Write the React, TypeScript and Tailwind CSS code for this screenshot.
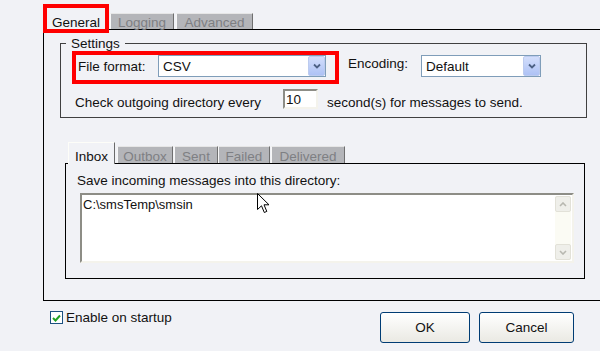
import React from 'react';

const ComboBox: React.FC<{ value: string; className: string }> = ({ value, className }) => (
  <div className={`${className} h-[22px] border border-[#7f9db9] bg-white flex items-center`}>
    <span className="flex-1 pl-[4px] leading-[13px]">{value}</span>
    <span className="w-[17px] h-[20px] rounded-[2px] border border-[#bccbef] bg-linear-to-b from-[#d3defb] to-[#aec2f5] flex items-center justify-center">
      <svg width="8" height="6" viewBox="0 0 8 6">
        <path d="M1 1.5 L4 4.5 L7 1.5" fill="none" stroke="#4d6185" strokeWidth="1.8" />
      </svg>
    </span>
  </div>
);

const ScrollButton: React.FC<{ up?: boolean }> = ({ up }) => (
  <div className="w-[16px] h-[16px] rounded-[2px] border border-[#e2e1d8] bg-[#efefea] flex items-center justify-center">
    <svg width="8" height="5" viewBox="0 0 8 5">
      <path d={up ? 'M1 4 L4 1 L7 4' : 'M1 1 L4 4 L7 1'} fill="none" stroke="#b8b8b0" strokeWidth="1.6" />
    </svg>
  </div>
);

const App: React.FC = () => {
  return (
    <div className="relative w-[600px] h-[351px] overflow-hidden bg-[#f1f2f6] text-[13.5px] text-[#111] font-['Liberation_Sans',Arial,sans-serif]">
      {/* Top tabs */}
      <div className="flex items-end h-[29px] pl-[43px]">
        <div className="relative z-10 -mb-[4px] w-[66px] h-[29px] border-4 border-[#ff0000] bg-[#f1f2f6] pt-[8px] text-center leading-[13px]">
          General
        </div>
        <div className="ml-[1px] w-[64px] h-[16px] border-t border-l border-r border-t-[#e6e6e6] border-l-[#f7f7f7] border-r-[#6f6f6f] bg-[#b4b5b9] text-[#7e7f83] text-center leading-[13px] pt-[2px]">
          Logging
        </div>
        <div className="ml-[2px] w-[77px] h-[16px] border-t border-l border-r border-t-[#e6e6e6] border-l-[#f7f7f7] border-r-[#6f6f6f] bg-[#b4b5b9] text-[#7e7f83] text-center leading-[13px] pt-[2px]">
          Advanced
        </div>
      </div>

      {/* General panel */}
      <div className="ml-[43px] w-[570px] h-[272px] border-t border-l border-b border-black">
        <fieldset className="ml-[16px] mt-[7px] w-[527px] h-[81px] border border-[#404040]">
          <legend className="ml-[5px] px-[5px] leading-[13px]">Settings</legend>
          <div className="flex items-start mt-[1px] ml-[11px]">
            <div className="w-[267px] h-[33px] border-4 border-[#ff0000] flex items-start">
              <span className="w-[82px] pl-[2px] pt-[5px] leading-[13px]">File format:</span>
              <ComboBox value="CSV" className="w-[168px]" />
            </div>
            <span className="ml-[9px] mt-[6px] w-[73px] leading-[13px]">Encoding:</span>
            <div className="mt-[4px]">
              <ComboBox value="Default" className="w-[120px]" />
            </div>
          </div>
          <div className="flex items-start mt-[5px] ml-[14px]">
            <span className="w-[208px] mt-[7px] leading-[13px]">Check outgoing directory every</span>
            <div className="w-[35px] h-[20px] border-2 border-t-[#8d8d86] border-l-[#8d8d86] border-r-[#f4f3ec] border-b-[#f4f3ec] bg-white pl-[1px] pt-[2px] leading-[13px]">
              10
            </div>
            <span className="ml-[9px] mt-[7px] leading-[13px]">second(s) for messages to send.</span>
          </div>
        </fieldset>

        {/* Inner tabs */}
        <div className="flex items-end h-[21px] mt-[24px] ml-[24px]">
          <div className="relative z-10 -mb-[1px] w-[47px] h-[22px] border-t border-l border-r border-t-[#fdfdf8] border-l-[#fdfdf8] border-r-[#6a6a6a] bg-[#f1f2f6] text-center leading-[13px] pt-[7px]">
            Inbox
          </div>
          <div className="ml-[2px] w-[56px] h-[17px] border-t border-l border-r border-t-[#e6e6e6] border-l-[#f7f7f7] border-r-[#6f6f6f] bg-[#b4b5b9] text-[#7e7f83] text-center leading-[13px] pt-[3px]">
            Outbox
          </div>
          <div className="ml-[1px] w-[44px] h-[17px] border-t border-l border-r border-t-[#e6e6e6] border-l-[#f7f7f7] border-r-[#6f6f6f] bg-[#b4b5b9] text-[#7e7f83] text-center leading-[13px] pt-[3px]">
            Sent
          </div>
          <div className="w-[52px] h-[17px] border-t border-l border-r border-t-[#e6e6e6] border-l-[#f7f7f7] border-r-[#6f6f6f] bg-[#b4b5b9] text-[#7e7f83] text-center leading-[13px] pt-[3px]">
            Failed
          </div>
          <div className="ml-[1px] w-[74px] h-[17px] border-t border-l border-r border-t-[#e6e6e6] border-l-[#f7f7f7] border-r-[#6f6f6f] bg-[#b4b5b9] text-[#7e7f83] text-center leading-[13px] pt-[3px]">
            Delivered
          </div>
        </div>
        <div className="ml-[21px] w-[520px] h-[116px] border border-black">
          <div className="ml-[11px] mt-[10px] leading-[13px]">Save incoming messages into this directory:</div>
          <div className="ml-[14px] mt-[6px] w-[494px] h-[70px] border-2 border-t-[#8d8d86] border-l-[#8d8d86] border-r-[#f4f3ec] border-b-[#f4f3ec] bg-white flex">
            <div className="flex-1 pl-[1px] pt-[3px] leading-[13px] text-[13px]">C:\smsTemp\smsin</div>
            <div className="w-[16px] my-[1px] mr-[1px] bg-[#fbfbf4] flex flex-col justify-between">
              <ScrollButton up />
              <ScrollButton />
            </div>
          </div>
        </div>
      </div>

      {/* Bottom row */}
      <div className="flex items-start mt-[10px]">
        <div className="flex items-start pl-[50px]">
          <div className="w-[13px] h-[13px] border border-[#1c5180] bg-white flex items-center justify-center">
            <svg width="9" height="8" viewBox="0 0 9 8">
              <path d="M1 4 L3.5 6.5 L8 1.5" fill="none" stroke="#21a121" strokeWidth="2" />
            </svg>
          </div>
          <span className="ml-[3px] leading-[13px]">Enable on startup</span>
        </div>
        <div className="ml-auto mr-[26px] mt-[1px] flex">
          <button className="w-[90px] h-[31px] rounded-[3px] border border-[#003c74] bg-linear-to-b from-[#ffffff] to-[#eae9e3] flex items-center justify-center leading-[13px]">
            OK
          </button>
          <button className="ml-[9px] w-[95px] h-[31px] rounded-[3px] border border-[#003c74] bg-linear-to-b from-[#ffffff] to-[#eae9e3] flex items-center justify-center leading-[13px]">
            Cancel
          </button>
        </div>
      </div>

      {/* Mouse pointer */}
      <svg className="absolute left-[257px] top-[193px]" width="14" height="21" viewBox="0 0 14 21">
        <path d="M0.5 0.5 L0.5 16.5 L4.5 12.8 L7.3 19.5 L9.8 18.4 L7 11.8 L12 11.8 Z" fill="#fff" stroke="#000" strokeWidth="1" />
      </svg>
    </div>
  );
};

export default App;
